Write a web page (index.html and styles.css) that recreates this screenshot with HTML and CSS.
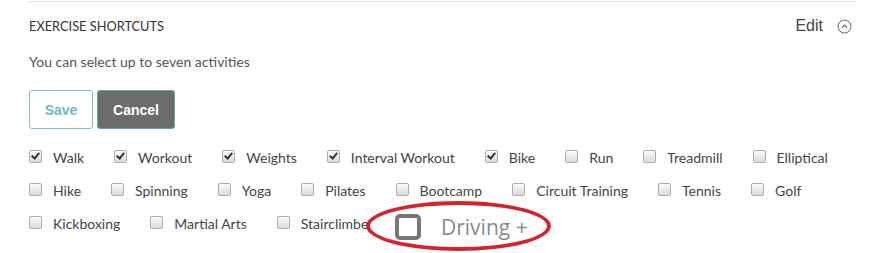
FILE: index.html
```html
<!DOCTYPE html>
<html>
<head>
<meta charset="utf-8">
<link rel="stylesheet" href="styles.css">
</head>
<body>
<div class="panel">
  <div class="header">
    <span class="title">EXERCISE SHORTCUTS</span>
    <span class="edit">Edit
      <svg class="chev" width="15" height="15" viewBox="0 0 15 15"><circle cx="7.5" cy="7.5" r="6.5" fill="none" stroke="#666" stroke-width="1"/><path d="M4.8 8.8 L7.5 6 L10.2 8.8" fill="none" stroke="#666" stroke-width="1.1"/></svg>
    </span>
  </div>
  <p class="desc">You can select up to seven activities</p>
  <div class="actions">
    <button class="btn btn-save">Save</button>
    <button class="btn btn-cancel">Cancel</button>
  </div>
  <div class="row">
    <label class="item"><span class="cb checked"></span>Walk</label>
    <label class="item"><span class="cb checked"></span>Workout</label>
    <label class="item"><span class="cb checked"></span>Weights</label>
    <label class="item"><span class="cb checked"></span>Interval Workout</label>
    <label class="item"><span class="cb checked"></span>Bike</label>
    <label class="item"><span class="cb"></span>Run</label>
    <label class="item"><span class="cb"></span>Treadmill</label>
    <label class="item"><span class="cb"></span>Elliptical</label>
  </div>
  <div class="row">
    <label class="item"><span class="cb"></span>Hike</label>
    <label class="item"><span class="cb"></span>Spinning</label>
    <label class="item"><span class="cb"></span>Yoga</label>
    <label class="item"><span class="cb"></span>Pilates</label>
    <label class="item"><span class="cb"></span>Bootcamp</label>
    <label class="item"><span class="cb"></span>Circuit Training</label>
    <label class="item"><span class="cb"></span>Tennis</label>
    <label class="item"><span class="cb"></span>Golf</label>
  </div>
  <div class="row">
    <label class="item"><span class="cb"></span>Kickboxing</label>
    <label class="item"><span class="cb"></span>Martial Arts</label>
    <label class="item"><span class="cb"></span>Stairclimber</label>
  </div>
</div>
<div class="callout">
  <span class="big-cb"></span>
  <span class="callout-text">Driving +</span>
</div>
</body>
</html>
```
FILE: styles.css
```css
html, body {
  margin: 0;
  padding: 0;
  background: #fff;
  width: 884px;
  height: 253px;
  overflow: hidden;
  position: relative;
}
body {
  font-family: "Lato", "Liberation Sans", sans-serif;
  color: #444;
}
.panel {
  margin: 1px 0 0 28px;
  width: 827px;
  border-top: 1px solid #e2e2e2;
  padding-left: 1px;
  box-sizing: border-box;
}
.header {
  display: flex;
  justify-content: space-between;
  align-items: center;
  height: 48px;
  padding-right: 3px;
}
.title {
  font-size: 12.8px;
  color: #333;
}
.edit {
  font-family: "Liberation Sans", Arial, sans-serif;
  font-size: 16px;
  color: #444;
  display: flex;
  align-items: center;
  gap: 14px;
}
.chev {
  display: block;
  margin-top: 1px;
}
.desc {
  margin: 2px 0 0;
  line-height: 20px;
  font-size: 14px;
  color: #555;
}
.actions {
  display: flex;
  gap: 4px;
  margin-top: 18px;
}
.btn {
  height: 39px;
  font-family: "Liberation Sans", Arial, sans-serif;
  font-weight: bold;
  font-size: 14px;
  border-radius: 3px;
  padding: 0;
  margin: 0;
}
.btn-save {
  width: 64px;
  background: #fff;
  color: #6bbcbc;
  border: 1px solid #7cc4c4;
}
.btn-cancel {
  width: 78px;
  background: #6c6c6c;
  color: #fff;
  border: 1px solid #5aa7a8;
}
.row {
  display: flex;
  height: 33px;
  align-items: center;
}
.actions + .row {
  margin-top: 12px;
}
.item {
  display: flex;
  align-items: center;
  font-size: 14px;
  color: #444;
  margin-right: 30px;
  white-space: nowrap;
}
.cb {
  width: 11px;
  height: 11px;
  border: 1px solid #adadad;
  border-radius: 2px;
  background: linear-gradient(#fbfbfb, #dadada);
  margin-right: 11px;
  margin-top: -3px;
  position: relative;
}
.cb.checked::after {
  content: "";
  position: absolute;
  left: 3px;
  top: 0px;
  width: 3px;
  height: 6px;
  border-right: 2px solid #333;
  border-bottom: 2px solid #333;
  transform: rotate(40deg);
}
.callout {
  position: absolute;
  left: 366px;
  top: 201px;
  width: 177px;
  height: 42px;
  border: 4px solid #d5232b;
  border-radius: 50%;
  background: #fff;
  display: flex;
  align-items: center;
}
.big-cb {
  width: 18px;
  height: 18px;
  border: 4px solid #777;
  border-radius: 5px;
  margin-left: 25px;
  margin-top: 2px;
}
.callout-text {
  font-family: "Open Sans", sans-serif;
  font-size: 21px;
  color: #8a8a8a;
  margin-left: 20px;
  margin-top: 1px;
}
```
